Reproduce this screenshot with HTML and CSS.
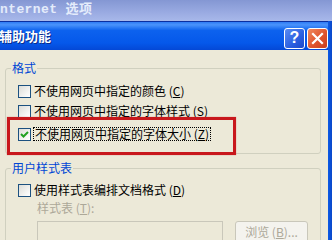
FILE: index.html
```html
<!DOCTYPE html>
<html>
<head>
<meta charset="utf-8">
<link rel="stylesheet" href="styles.css">
</head>
<body>
<div class="screen">
  <div class="parent-title">nternet 选项</div>
  <div class="window">
    <div class="frame">
      <div class="titlebar">
        <span class="title">辅助功能</span>
        <div class="tb-buttons">
          <span class="tb-btn help">?</span>
          <span class="tb-btn close">
            <svg width="13" height="13" viewBox="0 0 13 13"><path d="M2 2 L11 11 M11 2 L2 11" stroke="#fff" stroke-width="2.2" stroke-linecap="square"/></svg>
          </span>
        </div>
      </div>
      <div class="body">
        <fieldset class="group g1">
          <legend>格式</legend>
          <div class="rows">
            <div class="row"><span class="cb"></span><span class="txt">不使用网页中指定的颜色 (<u>C</u>)</span></div>
            <div class="row"><span class="cb"></span><span class="txt">不使用网页中指定的字体样式 (<u>S</u>)</span></div>
            <div class="row r3"><span class="cb checked"><svg width="11" height="11" viewBox="0 0 11 11"><path d="M2 5 L4.5 7.5 L9 3" fill="none" stroke="#21a121" stroke-width="2"/></svg></span><span class="txt focus">不使用网页中指定的字体大小 (<u>Z</u>)</span></div>
          </div>
        </fieldset>
        <fieldset class="group g2">
          <legend>用户样式表</legend>
          <div class="rows">
            <div class="row"><span class="cb"></span><span class="txt">使用样式表编排文档格式 (<u>D</u>)</span></div>
            <div class="sub-label">样式表 (<u>T</u>):</div>
            <div class="input-row">
              <span class="input"></span>
              <span class="browse">浏览 (<u>B</u>)...</span>
            </div>
          </div>
        </fieldset>
        <div class="highlight"></div>
      </div>
    </div>
    <div class="right-border"></div>
  </div>
</div>
</body>
</html>
```

FILE: styles.css
```css
* { box-sizing: border-box; }
html, body { margin: 0; padding: 0; }
body {
  width: 332px;
  height: 240px;
  overflow: hidden;
  font-family: "Noto Sans CJK SC", "Liberation Sans", sans-serif;
  font-size: 12px;
  background: #ece9d8;
}
.screen { width: 332px; height: 240px; display: flex; flex-direction: column; }
.parent-title {
  height: 21px;
  flex: none;
  background: linear-gradient(#8497d3, #9aabe2 60%, #a8b8ea);
  color: #e4ecfb;
  font-family: "Liberation Mono", "Noto Sans CJK SC", monospace;
  font-weight: bold;
  font-size: 13px;
  line-height: 19px;
  letter-spacing: 0.4px;
  white-space: nowrap;
}
.window { flex: 1; display: flex; min-height: 0; }
.frame { flex: 1; display: flex; flex-direction: column; min-width: 0; }
.right-border {
  width: 4px;
  flex: none;
  background: linear-gradient(90deg, #0b5ae6, #0a47c8);
}
.titlebar {
  height: 29px;
  flex: none;
  border-top: 1px solid #0a2fa0;
  background: linear-gradient(#2f7cf5 0%, #4a93fb 10%, #0d62ee 30%, #0558ea 75%, #0448d6 100%);
  display: flex;
  align-items: center;
  justify-content: space-between;
}
.title {
  color: #fff;
  font-weight: bold;
  font-size: 13px;
  line-height: 14px;
  margin-left: -1px;
  text-shadow: 1px 1px 0 #0a2b8a;
}
.tb-buttons { display: flex; gap: 2px; margin-top: 4px; }
.tb-btn {
  width: 21px;
  height: 21px;
  border: 1px solid #fff;
  border-radius: 3px;
  display: flex;
  align-items: center;
  justify-content: center;
  color: #fff;
}
.help {
  background: linear-gradient(135deg, #5a8cf2, #2a5fe0 60%, #1c48c8);
  font-family: "Liberation Sans", sans-serif;
  font-weight: bold;
  font-size: 16px;
}
.close {
  background: linear-gradient(135deg, #f08a5e, #e0542e 55%, #c8401f);
}
.body {
  flex: 1;
  position: relative;
  padding: 12px 7px 0 5px;
  display: flex;
  flex-direction: column;
  gap: 8px;
}
.group {
  margin: 0;
  padding: 0 0 0 12px;
  border: 1px solid #d0d0bf;
  border-radius: 3px;
  min-width: 0;
}
.group legend {
  color: #0046d5;
  padding: 0 1px;
  margin-left: -7px;
  line-height: 12px;
  font-size: 12px;
}
.rows { display: flex; flex-direction: column; }
.g1 .rows { padding-top: 7px; height: 79px; }
.g2 .rows { padding-top: 6px; }
.row { height: 20px; display: flex; align-items: center; gap: 2px; }
.r3 { margin-top: 3px; }
.cb {
  width: 13px;
  height: 13px;
  flex: none;
  border: 1px solid #1c5180;
  background: linear-gradient(135deg, #dcdcd7, #f6f6f4 70%, #ffffff);
  display: flex;
  align-items: center;
  justify-content: center;
}
.txt { color: #000; white-space: nowrap; line-height: 12px; padding: 1px 1px; }
.focus { border: 1px dotted #000; padding: 0 1px; }
.sub-label { color: #aca899; margin: 1px 0 0 19px; line-height: 12px; height: 20px; padding-top: 1px; }
.input-row { display: flex; gap: 12px; margin-left: 19px; }
.input {
  width: 186px;
  height: 22px;
  border: 1px solid #c9c7ba;
  background: #ece9d8;
}
.browse {
  width: 73px;
  height: 22px;
  border: 1px solid #c9c7ba;
  border-radius: 3px;
  background: #f4f3ee;
  color: #aca899;
  display: flex;
  align-items: center;
  justify-content: center;
  line-height: 12px;
}
.highlight {
  position: absolute;
  left: 7px;
  top: 67px;
  width: 229px;
  height: 38px;
  border: 3px solid #c8181c;
  box-shadow: 0 0 1px rgba(200,24,28,0.5);
}
```
